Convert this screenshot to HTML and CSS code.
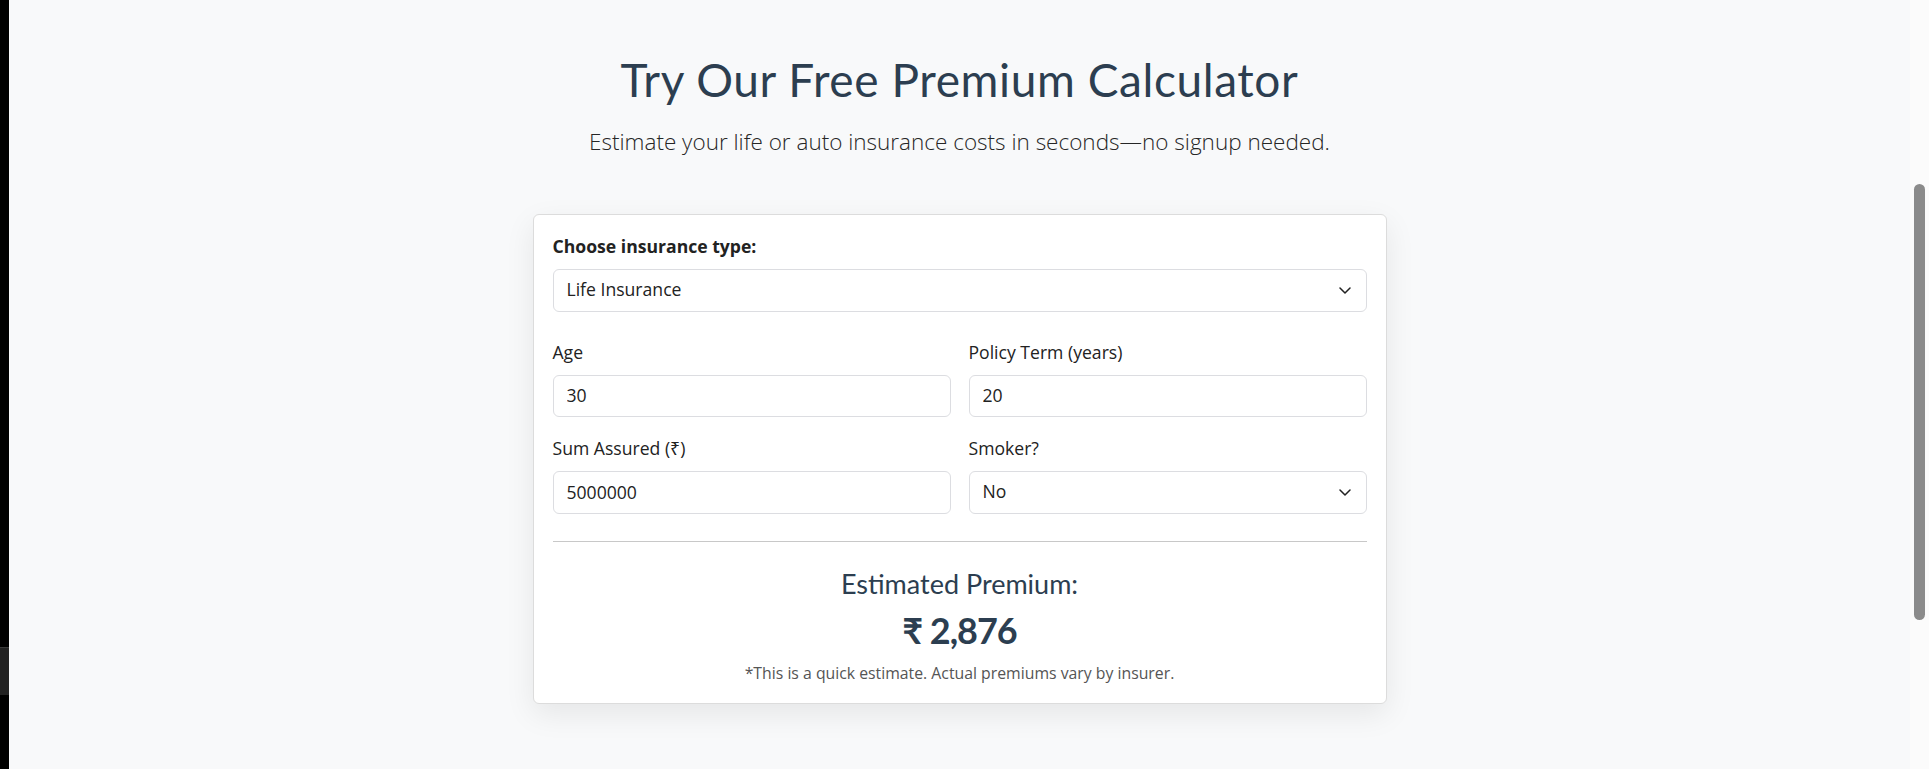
FILE: index.html
```html
<!DOCTYPE html>
<html lang="en">
<head>
<meta charset="utf-8">
<title>Premium Calculator</title>
<link rel="stylesheet" href="styles.css">
</head>
<body>
<div class="frame">
  <div class="edge"><div class="edge-tab"></div></div>
  <main class="page">
    <h1 class="title">Try Our Free Premium Calculator</h1>
    <p class="subtitle">Estimate your life or auto insurance costs in seconds—no signup needed.</p>
    <section class="card">
      <label class="type-label" for="type">Choose insurance type:</label>
      <div class="select-wrap">
        <select id="type" class="field field-select">
          <option>Life Insurance</option>
          <option>Auto Insurance</option>
        </select>
        <svg class="chevron" viewBox="0 0 12 7" width="12" height="7"><path d="M1 1 L6 6 L11 1" fill="none" stroke="#222" stroke-width="1.5" stroke-linecap="round" stroke-linejoin="round"/></svg>
      </div>
      <div class="grid">
        <div class="group">
          <label class="lbl" for="age">Age</label>
          <input id="age" class="field" type="text" value="30">
        </div>
        <div class="group">
          <label class="lbl" for="term">Policy Term (years)</label>
          <input id="term" class="field" type="text" value="20">
        </div>
        <div class="group">
          <label class="lbl" for="sum">Sum Assured (₹)</label>
          <input id="sum" class="field" type="text" value="5000000">
        </div>
        <div class="group">
          <label class="lbl" for="smoker">Smoker?</label>
          <div class="select-wrap">
            <select id="smoker" class="field field-select">
              <option>No</option>
              <option>Yes</option>
            </select>
            <svg class="chevron" viewBox="0 0 12 7" width="12" height="7"><path d="M1 1 L6 6 L11 1" fill="none" stroke="#222" stroke-width="1.5" stroke-linecap="round" stroke-linejoin="round"/></svg>
          </div>
        </div>
      </div>
      <hr class="divider">
      <div class="result">
        <h3 class="result-title">Estimated Premium:</h3>
        <div class="amount">₹ 2,876</div>
        <p class="note">*This is a quick estimate. Actual premiums vary by insurer.</p>
      </div>
    </section>
  </main>
  <div class="scroll-track"><div class="scroll-thumb"></div></div>
</div>
</body>
</html>
```
FILE: styles.css
```css
* { box-sizing: border-box; }
html, body {
  margin: 0;
  padding: 0;
  height: 100%;
  overflow: hidden;
}
body {
  font-family: "Open Sans", "Noto Sans", sans-serif;
  background: #f8f9fa;
  color: #222;
}
.frame {
  display: flex;
  height: 769px;
}
.edge {
  width: 9px;
  flex: 0 0 9px;
  background: #000;
  padding-top: 647px;
}
.edge-tab {
  height: 48px;
  background: #222;
  border-top: 1px solid #3a3a3a;
}
.page {
  flex: 1;
  padding-top: 52px;
  text-align: center;
}
.title {
  margin: 0;
  font-family: "Lato", "Noto Sans", sans-serif;
  font-weight: 400;
  font-size: 46px;
  letter-spacing: 0.6px;
  line-height: 55px;
  color: #2c3e50;
}
.subtitle {
  margin: 20px 0 0;
  font-weight: 300;
  font-size: 22.5px;
  line-height: 30px;
  color: #262626;
}
.card {
  width: 854px;
  margin: 57px auto 0;
  background: #fff;
  border: 1px solid #dcdcdc;
  border-radius: 6px;
  padding: 19px 19px 19px;
  text-align: left;
  box-shadow: 0 10px 30px rgba(0, 0, 0, 0.08);
}
.type-label {
  display: block;
  font-weight: 700;
  font-size: 17.6px;
  line-height: 24px;
  color: #222;
  margin-bottom: 11px;
}
.select-wrap {
  position: relative;
}
.field {
  display: block;
  width: 100%;
  height: 42.5px;
  margin: 0;
  padding: 0 13px 1px;
  font-family: "Open Sans", "Noto Sans", sans-serif;
  font-size: 17.6px;
  color: #222;
  background: #fff;
  border: 1px solid #dcdde1;
  border-radius: 6px;
  outline: none;
  appearance: none;
  -webkit-appearance: none;
}
.field-select {
  padding-bottom: 2px;
}
.chevron {
  position: absolute;
  right: 16px;
  top: 50%;
  width: 12px;
  height: 7px;
  margin-top: -3.5px;
  pointer-events: none;
}
.grid {
  display: grid;
  grid-template-columns: 1fr 1fr;
  column-gap: 18px;
  row-gap: 19px;
  margin-top: 28px;
}
.lbl {
  display: block;
  font-size: 17.6px;
  line-height: 24px;
  color: #222;
  margin-bottom: 11px;
}
.divider {
  margin: 27px 0 0;
  border: 0;
  border-top: 1px solid #c8c8c8;
}
.result {
  text-align: center;
  padding-top: 26px;
}
.result-title {
  margin: 0;
  font-family: "Lato", "Noto Sans", sans-serif;
  font-weight: 400;
  font-size: 27px;
  line-height: 32px;
  color: #2c3e50;
}
.amount {
  margin-top: 6.5px;
  font-family: "Lato", "Noto Sans", sans-serif;
  font-weight: 700;
  font-size: 36px;
  letter-spacing: -1px;
  line-height: 48px;
  color: #2c3e50;
}
.note {
  margin: 8.5px 0 0;
  font-size: 15.8px;
  line-height: 21.6px;
  color: #555;
}
.scroll-track {
  flex: 0 0 19px;
  width: 19px;
  background: #fbfbfb;
  padding: 184px 4px 0 4px;
}
.scroll-thumb {
  height: 436px;
  width: 11px;
  border-radius: 6px;
  background: #8b8b8b;
}
```
